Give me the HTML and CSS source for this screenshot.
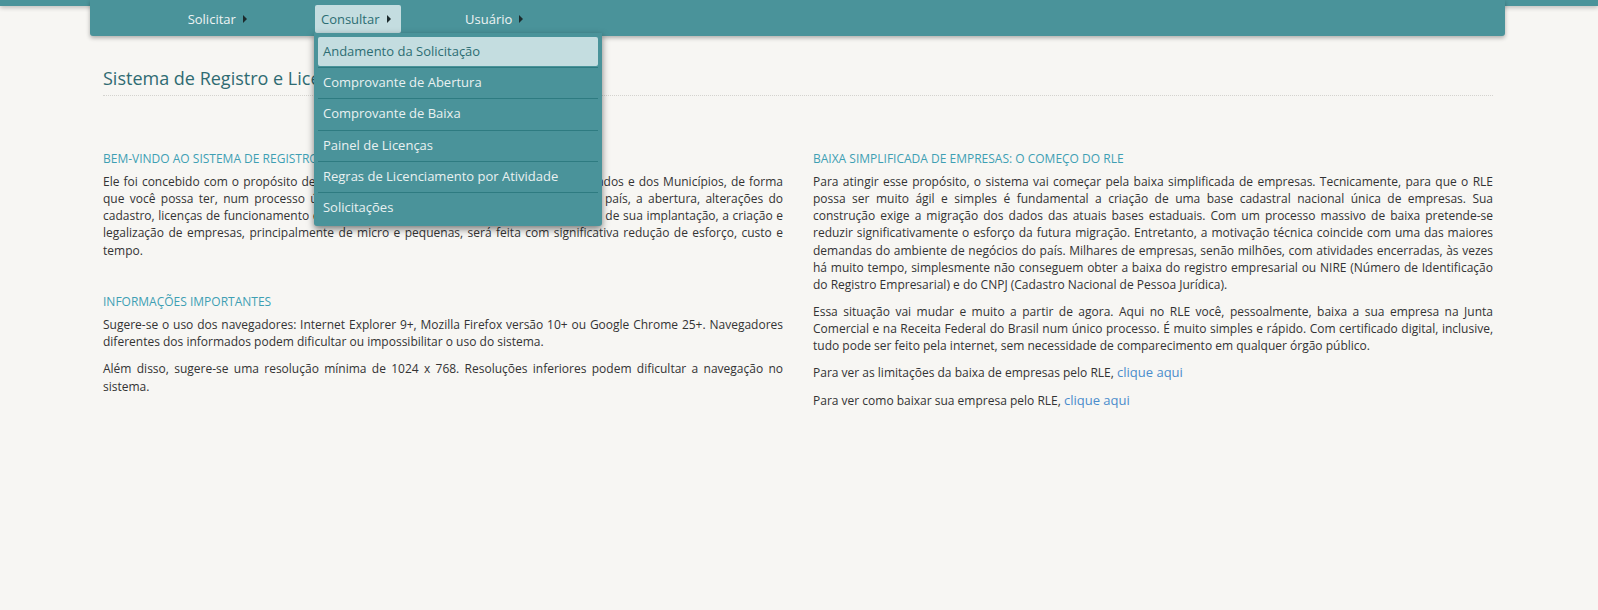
FILE: index.html
```html
<!DOCTYPE html>
<html lang="pt-BR">
<head>
<meta charset="utf-8">
<title>Sistema de Registro e Licenciamento de Empresas</title>
<link rel="stylesheet" href="styles.css">
</head>
<body>
<div class="topbar"></div>
<nav class="navbar">
  <ul class="nav">
    <li class="nav-item">
      <div class="menu-wrap">
        <a class="nav-link" href="#">Solicitar<span class="caret"></span></a>
      </div>
    </li>
    <li class="nav-item open">
      <div class="menu-wrap">
        <a class="nav-link" href="#">Consultar<span class="caret"></span></a>
        <ul class="dropdown">
          <li class="active"><a href="#">Andamento da Solicitação</a></li>
          <li><a href="#">Comprovante de Abertura</a></li>
          <li><a href="#">Comprovante de Baixa</a></li>
          <li><a href="#">Painel de Licenças</a></li>
          <li><a href="#">Regras de Licenciamento por Atividade</a></li>
          <li><a href="#">Solicitações</a></li>
        </ul>
      </div>
    </li>
    <li class="nav-item">
      <div class="menu-wrap">
        <a class="nav-link" href="#">Usuário<span class="caret"></span></a>
      </div>
    </li>
  </ul>
</nav>

<main class="container">
  <div class="page-header">
    <h1>Sistema de Registro e Licenciamento de Empresas</h1>
  </div>
  <div class="row">
    <div class="col">
      <section class="section">
        <h2>Bem-vindo ao Sistema de Registro e Licenciamento de Empresas</h2>
        <p>Ele foi concebido com o propósito de integrar os órgãos e entidades da União, dos Estados e dos Municípios, de forma que você possa ter, num processo único, simples e integrado, em qualquer lugar do país, a abertura, alterações do cadastro, licenças de funcionamento e a baixa de empresas de forma integrada. Ao final de sua implantação, a criação e legalização de empresas, principalmente de micro e pequenas, será feita com significativa redução de esforço, custo e tempo.</p>
      </section>
      <section class="section">
        <h2>Informações importantes</h2>
        <p>Sugere-se o uso dos navegadores: Internet Explorer 9+, Mozilla Firefox versão 10+ ou Google Chrome 25+. Navegadores diferentes dos informados podem dificultar ou impossibilitar o uso do sistema.</p>
        <p>Além disso, sugere-se uma resolução mínima de 1024 x 768. Resoluções inferiores podem dificultar a navegação no sistema.</p>
      </section>
    </div>
    <div class="col">
      <section class="section">
        <h2>Baixa simplificada de empresas: o começo do RLE</h2>
        <p>Para atingir esse propósito, o sistema vai começar pela baixa simplificada de empresas. Tecnicamente, para que o RLE possa ser muito ágil e simples é fundamental a criação de uma base cadastral nacional única de empresas. Sua construção exige a migração dos dados das atuais bases estaduais. Com um processo massivo de baixa pretende-se reduzir significativamente o esforço da futura migração. Entretanto, a motivação técnica coincide com uma das maiores demandas do ambiente de negócios do país. Milhares de empresas, senão milhões, com atividades encerradas, às vezes há muito tempo, simplesmente não conseguem obter a baixa do registro empresarial ou NIRE (Número de Identificação do Registro Empresarial) e do CNPJ (Cadastro Nacional de Pessoa Jurídica).</p>
        <p>Essa situação vai mudar e muito a partir de agora. Aqui no RLE você, pessoalmente, baixa a sua empresa na Junta Comercial e na Receita Federal do Brasil num único processo. É muito simples e rápido. Com certificado digital, inclusive, tudo pode ser feito pela internet, sem necessidade de comparecimento em qualquer órgão público.</p>
        <p>Para ver as limitações da baixa de empresas pelo RLE, <a class="link" href="#">clique aqui</a></p>
        <p>Para ver como baixar sua empresa pelo RLE, <a class="link" href="#">clique aqui</a></p>
      </section>
    </div>
  </div>
</main>
</body>
</html>
```

FILE: styles.css
```css
* { box-sizing: border-box; }
html, body { margin: 0; padding: 0; }
body {
  background: #f7f6f3;
  font-family: "Open Sans", "Liberation Sans", sans-serif;
  font-size: 12px;
  color: #333333;
}

.topbar {
  height: 6px;
  background: #4a939a;
  box-shadow: 0 2px 4px rgba(0, 0, 0, 0.22);
}

.navbar {
  position: relative;
  z-index: 10;
  margin: -6px 0 0 90px;
  width: 1415px;
  height: 36px;
  background: #4a939a;
  border-radius: 0 0 3px 3px;
  box-shadow: 0 2px 4px rgba(0, 0, 0, 0.3);
}

.nav {
  list-style: none;
  margin: 0;
  padding: 0 0 0 60px;
  display: flex;
}

.nav-item {
  width: 138.5px;
  display: flex;
  justify-content: center;
}

.menu-wrap { position: relative; }

.nav-link {
  display: flex;
  align-items: center;
  margin-top: 5px;
  height: 27.7px;
  padding: 0 10px 0 6px;
  color: #eef4f4;
  font-size: 13px;
  text-decoration: none;
  border-radius: 2px;
}

.caret {
  display: inline-block;
  width: 0;
  height: 0;
  margin-left: 7px;
  border-left: 4px solid #1c2b2d;
  border-top: 4px solid transparent;
  border-bottom: 4px solid transparent;
}

.nav-item.open .nav-link {
  background: #c4dde0;
  color: #2c6d73;
}

.dropdown {
  position: absolute;
  top: 100%;
  left: -1px;
  width: 288px;
  margin: 0;
  padding: 4px 4px 3px;
  list-style: none;
  background: #4a939a;
  box-shadow: 0 3px 7px rgba(0, 0, 0, 0.5);
  border-radius: 0 0 3px 3px;
}

.dropdown li + li {
  border-top: 1px solid #2e7b81;
  margin-top: 1px;
}

.dropdown a {
  display: block;
  padding: 5px 5px;
  line-height: 19.35px;
  font-size: 13px;
  color: #e9f1f1;
  text-decoration: none;
  border-radius: 2px;
}

.dropdown li.active a {
  background: #c4dde0;
  color: #2c6d73;
}

.container {
  width: 1415px;
  margin-left: 90px;
  padding: 0 12px 0 13px;
}

.page-header {
  margin-top: 31.5px;
  padding-bottom: 7.5px;
  border-bottom: 1px dotted #d4d3cf;
}

.page-header h1 {
  margin: 0;
  font-size: 18px;
  line-height: 20px;
  font-weight: 400;
  color: #2f6b72;
}

.row {
  display: grid;
  grid-template-columns: 1fr 1fr;
  column-gap: 30px;
  margin-top: 54px;
}

.section + .section { margin-top: 34.5px; }

.section h2 {
  margin: 0 0 6px;
  font-size: 12px;
  line-height: 17px;
  font-weight: 400;
  color: #3e9fb3;
  text-transform: uppercase;
}

.section p {
  margin: 0 0 10px;
  line-height: 17.14px;
  text-align: justify;
}

.link {
  color: #4a8ccc;
  font-size: 13px;
  text-decoration: none;
}
```
